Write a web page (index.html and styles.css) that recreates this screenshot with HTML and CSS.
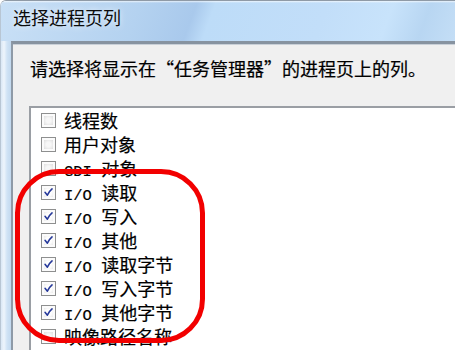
FILE: index.html
```html
<!DOCTYPE html>
<html lang="zh-CN">
<head>
    <meta charset="UTF-8">
    <meta name="viewport" content="width=device-width, initial-scale=1.0">
    <title>选择进程页列</title>
    <link rel="stylesheet" href="styles.css">
</head>
<body>
    <div class="window">
        <div class="titlebar">
            <span class="title">选择进程页列</span>
        </div>
        <div class="frame">
            <div class="client">
                <p class="prompt">请选择将显示在“任务管理器”的进程页上的列。</p>
                <ul class="listbox">
                    <li class="item"><span class="box"></span><span class="label">线程数</span></li>
                    <li class="item"><span class="box"></span><span class="label">用户对象</span></li>
                    <li class="item"><span class="box"></span><span class="label"><span class="en">GDI </span>对象</span></li>
                    <li class="item"><span class="box checked"><svg viewBox="0 0 15 15"><path d="M3.5 7.2 L6.2 10.6 Q8.4 6 11.6 3.4"/></svg></span><span class="label"><span class="en">I/O </span>读取</span></li>
                    <li class="item"><span class="box checked"><svg viewBox="0 0 15 15"><path d="M3.5 7.2 L6.2 10.6 Q8.4 6 11.6 3.4"/></svg></span><span class="label"><span class="en">I/O </span>写入</span></li>
                    <li class="item"><span class="box checked"><svg viewBox="0 0 15 15"><path d="M3.5 7.2 L6.2 10.6 Q8.4 6 11.6 3.4"/></svg></span><span class="label"><span class="en">I/O </span>其他</span></li>
                    <li class="item"><span class="box checked"><svg viewBox="0 0 15 15"><path d="M3.5 7.2 L6.2 10.6 Q8.4 6 11.6 3.4"/></svg></span><span class="label"><span class="en">I/O </span>读取字节</span></li>
                    <li class="item"><span class="box checked"><svg viewBox="0 0 15 15"><path d="M3.5 7.2 L6.2 10.6 Q8.4 6 11.6 3.4"/></svg></span><span class="label"><span class="en">I/O </span>写入字节</span></li>
                    <li class="item"><span class="box checked"><svg viewBox="0 0 15 15"><path d="M3.5 7.2 L6.2 10.6 Q8.4 6 11.6 3.4"/></svg></span><span class="label"><span class="en">I/O </span>其他字节</span></li>
                    <li class="item"><span class="box"></span><span class="label">映像路径名称</span></li>
                </ul>
            </div>
        </div>
        <!-- red highlight drawn over the list -->
        <div class="ring"></div>
    </div>
</body>
</html>
```

FILE: styles.css
```css
/* Page */
body {
    margin: 0;
    background: white;
    font-family: "Noto Sans CJK SC", "Liberation Sans", sans-serif;
    color: #000;
}

/* Dialog window */
.window {
    position: relative;
    width: 455px;
    height: 350px;
    overflow: hidden;
    display: flex;
    flex-direction: column;
    border-top-left-radius: 6px;
    border-top: 1px solid #8f9aa6;
    border-left: 1px solid #b8c6d4;
    box-sizing: border-box;
}

/* Title bar */
.titlebar {
    height: 40px;
    flex-shrink: 0;
    padding: 4px 0 0 12px;
    box-sizing: border-box;
    background:
        linear-gradient(180deg, rgba(255, 255, 255, 0.7) 0, rgba(255, 255, 255, 0) 2px),
        linear-gradient(110deg, #c9e0f6 0, #b4d2f0 30%, #a9c9ec 42%, #bddcf8 46%, #c2def9 70%, #c8e3fb 84%, #b8d6f2 92%, #c4def6 100%);
}

.title {
    font-size: 18px;
    line-height: 24px;
    color: #0c0c0c;
    text-shadow: 0 0 6px rgba(255, 255, 255, 0.9);
}

/* Frame + client area */
.frame {
    flex: 1;
    display: flex;
    padding-left: 10px;
    background: linear-gradient(90deg, #d9e7f5 0, #eef5fc 3px, #d0e3f5 6px, #c2d9ef 10px);
}

.client {
    flex: 1;
    background: #f0f0f0;
    border-left: 2px solid #8e9aa7;
    border-top: 3px solid #8793a0;
    box-shadow: inset 0 1px 0 #c9d0d8;
    padding: 12px 0 0 16px;
}

.prompt {
    margin: 0 0 26px 1px;
    font-size: 18px;
    line-height: 24px;
    white-space: nowrap;
    -webkit-text-stroke: 0.2px #000;
}

/* List of columns */
.listbox {
    list-style: none;
    margin: 0;
    padding: 0 0 0 10px;
    background: white;
    border-top: 2px solid #9a9ea4;
    border-left: 2px solid #9a9ea4;
    height: 400px;
}

.item {
    display: flex;
    align-items: center;
    height: 24px;
}

.box {
    width: 15px;
    height: 15px;
    box-sizing: border-box;
    border: 1px solid #8e8f8f;
    background: radial-gradient(circle, #f7f7f7 25%, #cdcdcd 100%);
    box-shadow: inset 0 0 0 2px #fbfbfb;
    flex-shrink: 0;
}

.box.checked {
    background: radial-gradient(circle, #fdfdfd 35%, #d8d8d8 100%);
}

.box svg {
    display: block;
    width: 13px;
    height: 13px;
}

.box path {
    fill: none;
    stroke: #26399a;
    stroke-width: 1.8;
    stroke-linecap: round;
    stroke-linejoin: round;
}

.label {
    margin-left: 8px;
    font-size: 18px;
    line-height: 24px;
    white-space: nowrap;
    -webkit-text-stroke: 0.2px #000;
}

.en {
    font-family: "Liberation Mono", monospace;
    font-size: 15.5px;
    line-height: 1;
}

/* Red marker */
.ring {
    position: absolute;
    left: 14px;
    top: 168px;
    width: 190px;
    height: 174px;
    box-sizing: border-box;
    border: 5px solid #f20000;
    border-radius: 44px;
}
```
